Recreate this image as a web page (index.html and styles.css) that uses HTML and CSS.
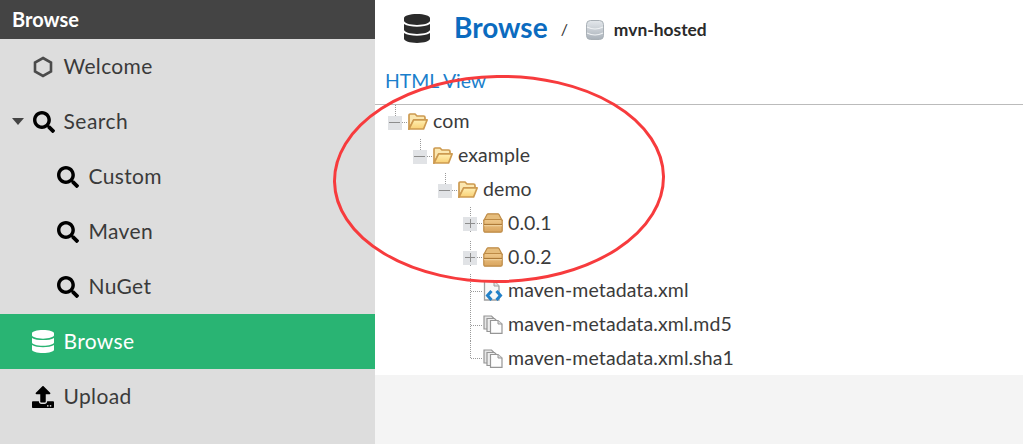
FILE: index.html
```html
<!DOCTYPE html>
<html lang="en">
<head>
<meta charset="utf-8">
<title>Browse</title>
<link rel="stylesheet" href="styles.css">
</head>
<body>
<svg class="defs" width="0" height="0" aria-hidden="true">
  <defs>
    <symbol id="i-search" viewBox="0 0 512 512"><path d="M505 442.7L405.3 343c-4.500-4.500-10.600-7-17-7H372c27.600-35.300 44-79.700 44-128C416 93.100 322.900 0 208 0S0 93.100 0 208s93.100 208 208 208c48.300 0 92.700-16.400 128-44v16.300c0 6.400 2.500 12.500 7 17l99.700 99.700c9.400 9.400 24.600 9.400 33.900 0l28.300-28.300c9.400-9.400 9.400-24.600.1-34zM208 336c-70.700 0-128-57.200-128-128 0-70.700 57.200-128 128-128 70.700 0 128 57.200 128 128 0 70.700-57.200 128-128 128z"/></symbol>
    <symbol id="i-db" viewBox="0 0 448 512" preserveAspectRatio="none"><path d="M448 73.143v45.714C448 159.143 347.667 192 224 192S0 159.143 0 118.857V73.143C0 32.857 100.333 0 224 0s224 32.857 224 73.143zM448 176v102.857C448 319.143 347.667 352 224 352S0 319.143 0 278.857V176c48.125 33.143 136.208 48.572 224 48.572S399.874 209.143 448 176zm0 160v102.857C448 479.143 347.667 512 224 512S0 479.143 0 438.857V336c48.125 33.143 136.208 48.572 224 48.572S399.874 369.143 448 336z"/></symbol>
    <symbol id="i-upload" viewBox="0 0 512 512"><path d="M296 384h-80c-13.300 0-24-10.700-24-24V192h-87.700c-17.800 0-26.700-21.500-14.100-34.100L242.300 5.700c7.500-7.500 19.800-7.500 27.300 0l152.200 152.200c12.600 12.600 3.700 34.100-14.100 34.100H320v168c0 13.300-10.700 24-24 24zm216-8v112c0 13.300-10.700 24-24 24H24c-13.300 0-24-10.700-24-24V376c0-13.300 10.700-24 24-24h136v8c0 30.900 25.100 56 56 56h80c30.900 0 56-25.100 56-56v-8h136c13.300 0 24 10.700 24 24zm-124 88c0-11-9-20-20-20s-20 9-20 20 9 20 20 20 20-9 20-20zm64 0c0-11-9-20-20-20s-20 9-20 20 9 20 20 20 20-9 20-20z"/></symbol>
    <linearGradient id="g-folder" x1="0" y1="0" x2="0" y2="1"><stop offset="0" stop-color="#fff0b4"/><stop offset="1" stop-color="#f9d074"/></linearGradient>
    <linearGradient id="g-box" x1="0" y1="0" x2="0" y2="1"><stop offset="0" stop-color="#efc88a"/><stop offset="1" stop-color="#d9a55f"/></linearGradient>
    <linearGradient id="g-repo" x1="0" y1="0" x2="0" y2="1"><stop offset="0" stop-color="#e4e8ec"/><stop offset="1" stop-color="#a9b1b9"/></linearGradient>
    <symbol id="i-folder" viewBox="0 0 20 17"><path d="M1 16V2.200Q1 1 2.200 1H7L9 3H15.500Q17 3 17 4.500V7H6L1 16Z" fill="#fbe7b0" stroke="#cd9a50" stroke-width="1.700"/><path d="M1 16 5.600 6.800H19.200L15.600 16Z" fill="url(#g-folder)" stroke="#cd9a50" stroke-width="1.700" stroke-linejoin="round"/></symbol>
    <symbol id="i-box" viewBox="0 0 20 20"><path d="M.8 7.500 4 1.500Q4.400.8 5 .8H15Q15.600.8 16 1.500L19.200 7.500Z" fill="#e6bd7c" stroke="#bd8a45" stroke-width="1.200"/><rect x=".8" y="6.500" width="18.400" height="12.700" rx="1.500" fill="url(#g-box)" stroke="#bd8a45" stroke-width="1.200"/><path d="M1 11.500H19" stroke="#ad7a38" stroke-width="1.200"/><path d="M1 12.700H19" stroke="#f2d5a2"/></symbol>
    <symbol id="i-xml" viewBox="0 0 20 21"><path d="M1.500 1H11L16 6V20H1.500Z" fill="#f7f7f7" stroke="#9e9e9e" stroke-width="1.300"/><path d="M11 1V6H16" fill="#dfdfdf" stroke="#9e9e9e"/><path d="M8.500 11 4.500 15.500 8.500 20M13.500 11 17.500 15.500 13.500 20" fill="none" stroke="#2280c8" stroke-width="3"/></symbol>
    <symbol id="i-files" viewBox="0 0 20 19"><path d="M1 1H8.500L10.500 3V14H1Z" fill="#e6e6e6" stroke="#969696" stroke-width="1.200"/><path d="M4 3.500H11.500L13.500 5.500V16.500H4Z" fill="#eee" stroke="#969696" stroke-width="1.200"/><path d="M7.500 5.500H15L19 9V18.300H7.500Z" fill="#fdfdfd" stroke="#969696" stroke-width="1.200"/><path d="M15 5.500V9H19" fill="#dcdcdc" stroke="#969696"/></symbol>
    <symbol id="c-root" viewBox="0 0 22 34"><path class="dot" d="M10.500 0V11M17 17.500H22"/><rect class="box" x="3" y="11" width="14" height="14"/><path class="sign" d="M4 17.500H15"/></symbol>
    <symbol id="c-plus" viewBox="0 0 22 34"><path class="dot" d="M10.500 1V27M17 17.500H22"/><rect class="box" x="3" y="11" width="14" height="14"/><path class="sign" d="M5 17.500H15M10.500 13V22"/></symbol>
    <symbol id="c-file" viewBox="0 0 22 34"><path class="dot" d="M10.500 0V34M11 17.500H22"/></symbol>
    <symbol id="c-last" viewBox="0 0 22 34"><path class="dot" d="M10.500 0V17.500H22"/></symbol>
  </defs>
</svg>

<div class="app">
  <nav class="sidebar">
    <div class="side-title">Browse</div>
    <ul class="menu">
      <li class="item">
        <svg class="ico hex" viewBox="0 0 20 22"><path d="M10 2 18 6.500V15.500L10 20 2 15.500V6.500Z" fill="none" stroke="#4b4b4b" stroke-width="2.600"/></svg>
        <span>Welcome</span>
      </li>
      <li class="item has-caret">
        <span class="caret"></span>
        <svg class="ico"><use href="#i-search"/></svg>
        <span>Search</span>
      </li>
      <li class="item sub"><svg class="ico"><use href="#i-search"/></svg><span>Custom</span></li>
      <li class="item sub"><svg class="ico"><use href="#i-search"/></svg><span>Maven</span></li>
      <li class="item sub"><svg class="ico"><use href="#i-search"/></svg><span>NuGet</span></li>
      <li class="item active"><svg class="ico"><use href="#i-db"/></svg><span>Browse</span></li>
      <li class="item"><svg class="ico"><use href="#i-upload"/></svg><span>Upload</span></li>
    </ul>
  </nav>

  <main class="main">
    <div class="panel">
      <header class="head">
        <svg class="head-db"><use href="#i-db"/></svg>
        <h1 class="head-title">Browse</h1>
        <span class="slash">/</span>
        <svg class="repo" viewBox="0 0 18 20"><rect x="0.500" y="0.500" width="17" height="19" rx="4" fill="url(#g-repo)" stroke="#a9b0b6"/><path d="M1 7Q9 11 17 7M1 13Q9 17 17 13" fill="none" stroke="#f0f2f4" stroke-width="1.200"/></svg>
        <span class="repo-name">mvn-hosted</span>
      </header>
      <div class="view-bar"><a class="view-link" href="#">HTML View</a></div>
      <ul class="tree">
        <li class="node l0"><svg class="conn"><use href="#c-root"/></svg><svg class="nico fold"><use href="#i-folder"/></svg><span>com</span></li>
        <li class="node l1"><svg class="conn"><use href="#c-root"/></svg><svg class="nico fold"><use href="#i-folder"/></svg><span>example</span></li>
        <li class="node l2"><svg class="conn"><use href="#c-root"/></svg><svg class="nico fold"><use href="#i-folder"/></svg><span>demo</span></li>
        <li class="node l3"><svg class="conn"><use href="#c-plus"/></svg><svg class="nico square"><use href="#i-box"/></svg><span>0.0.1</span></li>
        <li class="node l3"><svg class="conn"><use href="#c-plus"/></svg><svg class="nico square"><use href="#i-box"/></svg><span>0.0.2</span></li>
        <li class="node l3"><svg class="conn"><use href="#c-file"/></svg><svg class="nico tall"><use href="#i-xml"/></svg><span>maven-metadata.xml</span></li>
        <li class="node l3"><svg class="conn"><use href="#c-file"/></svg><svg class="nico"><use href="#i-files"/></svg><span>maven-metadata.xml.md5</span></li>
        <li class="node l3"><svg class="conn"><use href="#c-last"/></svg><svg class="nico"><use href="#i-files"/></svg><span>maven-metadata.xml.sha1</span></li>
      </ul>
    </div>
  </main>

  <svg class="annotation" viewBox="0 0 340 216" aria-hidden="true">
    <ellipse cx="170" cy="108" rx="164.500" ry="102.500" transform="rotate(-1 170 108)" fill="none" stroke="#f73b3d" stroke-width="3"/>
  </svg>
</div>
</body>
</html>
```

FILE: styles.css
```css
* { box-sizing: border-box; }

html, body {
  margin: 0;
  height: 100%;
  overflow: hidden;
}

body {
  font-family: "Lato", "Open Sans", sans-serif;
  color: #333;
}

.defs { position: absolute; }

.app {
  position: relative;
  display: grid;
  grid-template-columns: 375px 1fr;
  height: 444px;
}

.sidebar { background: #ddd; }

.side-title {
  height: 39px;
  padding-left: 12px;
  background: #444;
  color: #fff;
  font-size: 20px;
  font-weight: 700;
  line-height: 38px;
}

.menu, .tree {
  list-style: none;
  margin: 0;
  padding: 0;
}

.item {
  display: flex;
  align-items: center;
  height: 55px;
  padding-left: 32px;
  font-size: 21px;
  letter-spacing: 0.350px;
  color: #3a3a3a;
}

.item span:last-child { margin: 0 0 2px -0.500px; }
.item.has-caret span:last-child { margin-left: -1.500px; letter-spacing: 0.500px; }

.item.sub { padding-left: 57px; }
.item.has-caret { padding-left: 12px; }

.item.active {
  background: #29b473;
  color: #fff;
}

.ico {
  flex: none;
  width: 22px;
  height: 22px;
  margin-right: 10px;
  fill: #000;
}

.hex { width: 22px; height: 22px; }
.active .ico { fill: #fff; height: 23px; }

.caret {
  flex: none;
  width: 0;
  height: 0;
  margin-right: 9px;
  border-left: 6px solid transparent;
  border-right: 6px solid transparent;
  border-top: 7px solid #444;
}

.main {
  background: #f4f4f4;
}

.panel { background: #fff; }

.head {
  display: flex;
  align-items: center;
  height: 56px;
  padding-left: 29px;
}

.head-db {
  flex: none;
  width: 26px;
  height: 29px;
  margin-right: 24px;
  fill: #2b2b2b;
}

.head-title {
  margin: 0 0 2px;
  font-size: 28px;
  font-weight: 700;
  color: #0b6bbf;
}

.slash {
  margin-left: 13px;
  font-size: 16px;
  color: #333;
}

.repo {
  flex: none;
  width: 18px;
  height: 20px;
  margin: 4px 10px 0 18px;
}

.repo-name {
  margin-top: 2px;
  font-size: 17.400px;
  font-weight: 700;
  color: #2a2a2a;
}

.view-bar {
  height: 49px;
  padding: 11px 0 0 10px;
  border-bottom: 1px solid #bbb;
}

.view-link {
  font-size: 19.400px;
  line-height: 28px;
  color: #1b7fcc;
  text-decoration: none;
}

.node {
  display: flex;
  align-items: center;
  height: 33.800px;
  font-size: 19.500px;
  letter-spacing: 0.100px;
  color: #3b3b3b;
}

.node span { margin-bottom: 2px; }

.l0 { padding-left: 10px; }
.l1 { padding-left: 35px; }
.l2 { padding-left: 60px; }
.l3 { padding-left: 85px; }

.conn {
  flex: none;
  width: 22px;
  height: 34px;
  margin-right: 1px;
}

.nico {
  flex: none;
  width: 20px;
  height: 19px;
  margin-right: 5px;
}

.fold { height: 17px; }
.tall { height: 21px; }
.square { height: 20px; }

.dot {
  fill: none;
  stroke: #9a9a9a;
  stroke-width: 1;
  stroke-dasharray: 1 1;
}

.box { fill: #e1e3e6; }

.sign {
  fill: none;
  stroke: #8d8d8d;
  stroke-width: 1;
}

.annotation {
  position: absolute;
  left: 329px;
  top: 71px;
  width: 340px;
  height: 216px;
  pointer-events: none;
}
```
